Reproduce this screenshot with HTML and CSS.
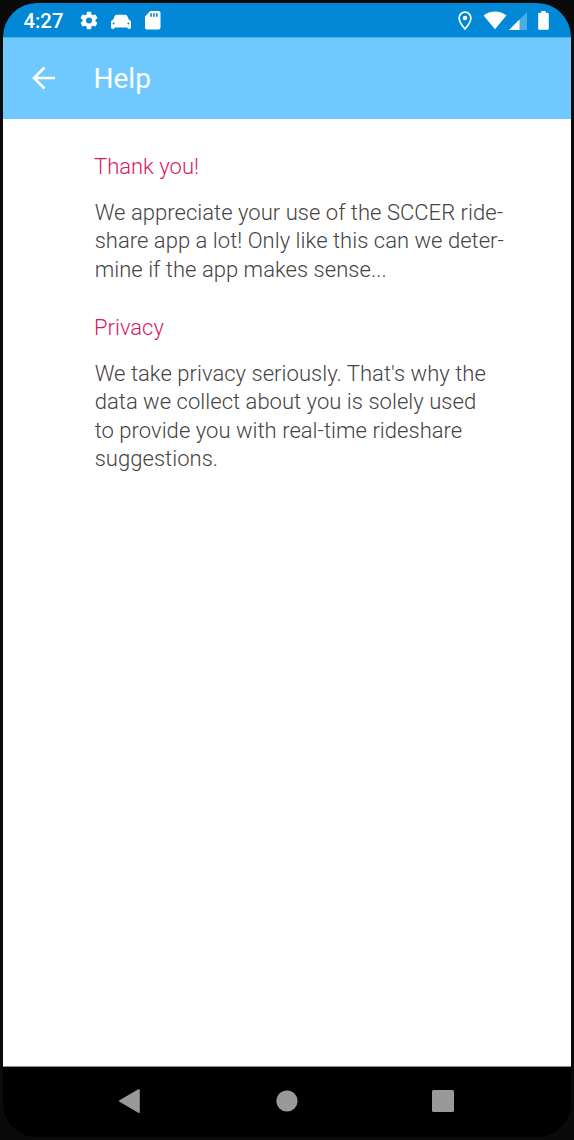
FILE: index.html
```html
<!DOCTYPE html>
<html lang="en">
<head>
<meta charset="utf-8">
<title>Help</title>
<link rel="stylesheet" href="styles.css">
</head>
<body>
<div class="screen">
  <header class="status">
    <span class="time">4:27</span>
    <svg class="gear" viewBox="2 2 20 20"><path d="M19.14 12.94c.04-.3.06-.61.06-.94 0-.32-.02-.64-.07-.94l2.03-1.58c.18-.14.23-.41.12-.61l-1.92-3.32c-.12-.22-.37-.29-.59-.22l-2.39.96c-.5-.38-1.03-.7-1.62-.94l-.36-2.54c-.04-.24-.24-.41-.48-.41h-3.84c-.24 0-.43.17-.47.41l-.36 2.54c-.59.24-1.13.57-1.62.94l-2.39-.96c-.22-.08-.47 0-.59.22L2.74 8.87c-.12.21-.08.47.12.61l2.03 1.58c-.05.3-.09.63-.09.94s.02.64.07.94l-2.03 1.58c-.18.14-.23.41-.12.61l1.92 3.32c.12.22.37.29.59.22l2.39-.96c.5.38 1.03.7 1.62.94l.36 2.54c.05.24.24.41.48.41h3.84c.24 0 .44-.17.47-.41l.36-2.54c.59-.24 1.13-.56 1.62-.94l2.39.96c.22.08.47 0 .59-.22l1.92-3.32c.12-.22.07-.47-.12-.61l-2.01-1.58zM12 15.3a3.3 3.3 0 1 1 0-6.6 3.3 3.3 0 0 1 0 6.6z"/></svg>
    <svg class="car" viewBox="0 0 20 16"><path fill-rule="evenodd" d="M3.600 2.200Q4.300.8 6 .8h8q1.700 0 2.400 1.400L17.800 5.400Q20 6.200 20 8v5.300q0 1.700-1.500 1.700-1.800 0-2.300-1.500H3.800Q3.300 15 1.500 15 0 15 0 13.300V8q0-1.800 2.200-2.600zM2.600 8.600a1 1 0 1 0 0 2 1 1 0 1 0 0-2zm14.800 0a1 1 0 1 0 0 2 1 1 0 1 0 0-2z"/></svg>
    <svg class="sd" viewBox="0 0 16 19"><path fill-rule="evenodd" d="M5.500 0H14q2 0 2 2v15q0 2-2 2H2q-2 0-2-2V5.500zM5.400 2.400v3.600h1.700V2.400zm3 0v3.600h1.700V2.400zm3 0v3.600h1.700V2.400z"/></svg>
    <svg class="pin" viewBox="0 0 14 20"><path class="outline" d="M7 1.100a5.900 5.900 0 0 0-5.900 5.900C1.100 11.300 7 18 7 18s5.900-6.700 5.900-11A5.900 5.900 0 0 0 7 1.100z"/><circle cx="7" cy="7" r="2.200"/></svg>
    <svg class="wifi" viewBox="0 0 24 19"><path d="M12 18.300.6 4.400Q5.500.4 12 .4t11.400 4z"/></svg>
    <svg class="signal" viewBox="0 0 18 18"><path opacity=".3" d="M18 0v18H0z"/><path d="M10.500 7.500V18H0z"/></svg>
    <svg class="battery" viewBox="0 0 11 19"><path d="M3.400 0h4.200v1.800h2q1.200 0 1.200 1.200v14.600q0 1.200-1.200 1.200H1.400q-1.200 0-1.200-1.200V3q0-1.200 1.200-1.200h2z"/></svg>
  </header>
  <div class="appbar">
    <svg class="back" viewBox="0 0 24 24"><path d="M23 12H2M12.500 1.500 2 12l10.500 10.500"/></svg>
    <h1 class="title">Help</h1>
  </div>
  <main class="content">
    <section class="topic">
      <h2 class="heading">Thank you!</h2>
      <p class="text">We appreciate your use of the SCCER ride-<br>share app a lot! Only like this can we deter-<br>mine if the app makes sense...</p>
    </section>
    <section class="topic">
      <h2 class="heading">Privacy</h2>
      <p class="text">We take privacy seriously. That's why the<br>data we collect about you is solely used<br>to provide you with real-time rideshare<br>suggestions.</p>
    </section>
  </main>
  <nav class="navbar">
    <svg class="nav-icon" viewBox="0 0 24 24"><path d="M1.500 11.200 20.300.3q1.500-.6 1.500 1v21.600q0 1.500-1.500.8L1.500 12.800q-1.400-.8 0-1.600z"/></svg>
    <svg class="nav-icon" viewBox="0 0 24 24"><circle cx="12" cy="12" r="10.600"/></svg>
    <svg class="nav-icon" viewBox="0 0 24 24"><rect x="1" y="1" width="22" height="22" rx="1.500"/></svg>
  </nav>
</div>
</body>
</html>
```
FILE: styles.css
```css
* { box-sizing: border-box; }
body {
  margin: 0;
  height: 1140px;
  padding: 3px 3px 3px;
  background: #0a0a0a;
  font-family: Roboto, sans-serif;
  overflow: hidden;
}
svg { display: block; flex: none; fill: #fff; }
.screen {
  display: flex;
  flex-direction: column;
  height: 1134px;
  border-radius: 34px;
  overflow: hidden;
  background: #000;
}
.status {
  display: flex;
  height: 34px;
  padding: 0 22.300px 0 20.500px;
  background: #0288d7;
  align-items: flex-start;
}
.time {
  width: 56.500px;
  padding-top: 6px;
  color: #fff;
  font-size: 20.300px;
  line-height: 24px;
  font-weight: 500;
}
.gear { width: 18px; height: 19px; margin-top: 8px; }
.car { width: 20px; height: 16px; margin: 11px 0 0 13px; }
.sd { width: 15.500px; height: 18.500px; margin: 8px 0 0 14px; }
.pin { width: 14px; height: 20px; margin: 7.500px 0 0 auto; }
.outline { fill: none; stroke: #fff; stroke-width: 1.700; }
.wifi { width: 24px; height: 19px; margin: 7.500px 0 0 11.500px; }
.signal { width: 18px; height: 18px; margin: 9px 0 0 1.500px; }
.battery { width: 11px; height: 19px; margin: 8px 0 0 11px; }
.appbar {
  display: flex;
  align-items: center;
  height: 81.500px;
  padding-left: 28.500px;
  background: #6fc9ff;
  border-top: 1px solid #50b3f0;
}
.back { width: 24px; height: 24px; margin-top: -1px; }
.back path { fill: none; stroke: #fff; stroke-width: 2.600; }
.title {
  margin: 2px 0 0 38px;
  color: #fff;
  font-size: 28px;
  line-height: 34px;
  font-weight: 400;
}
.content { flex: 1; padding: 34px 0 0 91px; background: #fff; }
.topic { margin-bottom: 29.700px; }
.heading {
  margin: 0 0 18.300px;
  color: #d81b60;
  font-size: 22px;
  line-height: 28px;
  font-weight: 300;
}
.text {
  margin: 0;
  padding-left: .7px;
  color: #444;
  font-size: 22px;
  line-height: 28.400px;
  font-weight: 300;
  letter-spacing: .035px;
  white-space: nowrap;
}
.navbar {
  display: flex;
  gap: 132.500px;
  height: 71px;
  padding: 22px 0 0 115px;
  background: #000;
  border-top: 1px solid #888;
}
.nav-icon { width: 24px; height: 24px; fill: #999; }
```
